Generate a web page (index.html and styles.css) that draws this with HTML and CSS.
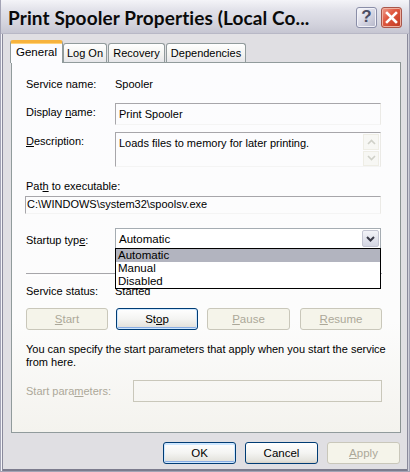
FILE: index.html
```html
<!DOCTYPE html>
<html>
<head>
<meta charset="utf-8">
<link rel="stylesheet" href="styles.css">
</head>
<body>
<div class="window">
  <div class="titlebar">
    <span class="title">Print Spooler Properties (Local Co...</span>
    <div class="tb-buttons">
      <div class="tb-btn help">?</div>
      <div class="tb-btn close">
        <svg width="13" height="13" viewBox="0 0 13 13"><path d="M2 2 L11 11 M11 2 L2 11" stroke="#fff" stroke-width="2.6" stroke-linecap="square"/></svg>
      </div>
    </div>
  </div>
  <div class="client">
    <div class="tabs">
      <div class="tab active">General</div>
      <div class="tab">Log On</div>
      <div class="tab">Recovery</div>
      <div class="tab">Dependencies</div>
    </div>
    <div class="panel">
      <div class="row r-name">
        <span class="label">Service name:</span>
        <span class="value">Spooler</span>
      </div>
      <div class="row r-display">
        <span class="label">Display <u>n</u>ame:</span>
        <div class="box display">Print Spooler</div>
      </div>
      <div class="row r-desc">
        <span class="label"><u>D</u>escription:</span>
        <div class="box desc">
          <span class="desc-text">Loads files to memory for later printing.</span>
          <div class="vscroll">
            <div class="sarrow"><svg width="9" height="6" viewBox="0 0 9 6"><path d="M1 5 L4.5 1.5 L8 5" fill="none" stroke="#cfd0c8" stroke-width="1.6"/></svg></div>
            <div class="sarrow"><svg width="9" height="6" viewBox="0 0 9 6"><path d="M1 1 L4.5 4.5 L8 1" fill="none" stroke="#cfd0c8" stroke-width="1.6"/></svg></div>
          </div>
        </div>
      </div>
      <div class="path-label">Pat<u>h</u> to executable:</div>
      <div class="box path">C:\WINDOWS\system32\spoolsv.exe</div>
      <div class="row r-startup">
        <span class="label">Startup typ<u>e</u>:</span>
        <div class="combo">
          <span class="combo-text">Automatic</span>
          <div class="combo-btn"><svg width="9" height="6" viewBox="0 0 9 6"><path d="M1 1 L4.5 4.5 L8 1" fill="none" stroke="#3a3a48" stroke-width="2"/></svg></div>
          <div class="dropdown">
            <div class="opt sel">Automatic</div>
            <div class="opt">Manual</div>
            <div class="opt">Disabled</div>
          </div>
        </div>
      </div>
      <div class="sep"></div>
      <div class="row r-status">
        <span class="label">Service status:</span>
        <span class="value">Started</span>
      </div>
      <div class="svc-buttons">
        <div class="btn disabled"><u>S</u>tart</div>
        <div class="btn focus">St<u>o</u>p</div>
        <div class="btn disabled"><u>P</u>ause</div>
        <div class="btn disabled"><u>R</u>esume</div>
      </div>
      <p class="info">You can specify the start parameters that apply when you start the service from here.</p>
      <div class="row r-params">
        <span class="label gray">Start para<u>m</u>eters:</span>
        <div class="box params"></div>
      </div>
    </div>
    <div class="footer">
      <div class="btn fbtn focus">OK</div>
      <div class="btn fbtn focus2">Cancel</div>
      <div class="btn fbtn disabled"><u>A</u>pply</div>
    </div>
  </div>
</div>
</body>
</html>
```

FILE: styles.css
```css
html, body {
  margin: 0;
  padding: 0;
  background: #e0dfe3;
}
body {
  width: 410px;
  height: 472px;
  overflow: hidden;
  font-family: "Liberation Sans", Arial, sans-serif;
  font-size: 11px;
  color: #000;
}
u { text-decoration: underline; text-underline-offset: 1px; }

.window {
  box-sizing: border-box;
  width: 410px;
  height: 472px;
  background: #e0dfe3;
  border: 1px solid #a3a3b5;
  border-top: none;
  box-shadow: inset 1px 0 0 #f4f4f8, inset -1px 0 0 #d0d0da, inset 2px 0 0 #8a8a9c, inset -2px 0 0 #8a8a9c, inset 0 -2px 0 #7c7c8e;
  display: flex;
  flex-direction: column;
}

.titlebar {
  height: 33px;
  flex: none;
  display: flex;
  align-items: center;
  justify-content: space-between;
  padding: 0 7px 0 7px;
  background: linear-gradient(#f4f4f8 0%, #e2e2ea 30%, #d4d4de 70%, #c6c6d2 100%);
  border-bottom: 1px solid #b8b8c6;
}
.title {
  font-family: "Lato", "Liberation Sans", sans-serif;
  font-weight: 700;
  font-size: 19px;
  letter-spacing: 0.1px;
  color: #0a0a0a;
  padding-top: 1px;
}
.tb-buttons {
  display: flex;
  gap: 4px;
  padding-top: 1px;
}
.tb-btn {
  width: 21px;
  height: 21px;
  box-sizing: border-box;
  border-radius: 3px;
  display: flex;
  align-items: center;
  justify-content: center;
}
.help {
  border: 1px solid #8a8ea8;
  background: linear-gradient(135deg, #fbfbfd 0%, #dcdce8 45%, #b4b6c8 100%);
  box-shadow: inset 0 0 0 1px #f2f2f8;
  font-family: "Liberation Sans", Arial, sans-serif;
  font-weight: 700;
  font-size: 17px;
  color: #4a4c62;
}
.close {
  border: 1px solid #a8564a;
  background: linear-gradient(135deg, #f0a090 0%, #e05a42 40%, #c0361e 100%);
  box-shadow: inset 0 0 0 1px #f0b0a0;
}

.client {
  flex: 1;
  display: flex;
  flex-direction: column;
  padding: 6px 10px 0 9px;
}

.tabs {
  display: flex;
  align-items: flex-end;
  height: 22px;
  position: relative;
  z-index: 2;
}
.tab {
  box-sizing: border-box;
  height: 19px;
  margin-right: 1px;
  border: 1px solid #919b9c;
  border-bottom: none;
  border-radius: 3px 3px 0 0;
  background: linear-gradient(#ffffff, #f3f3f0 60%, #e6e6ea);
  line-height: 18px;
  font-size: 11px;
  text-align: center;
}
.tab:nth-child(2) { width: 44px; }
.tab:nth-child(3) { width: 57px; }
.tab:nth-child(4) { width: 80px; }
.tab.active {
  height: 23px;
  width: 53px;
  margin-right: 0;
  margin-bottom: -1px;
  background: #fcfcfe;
  border-top: 3px solid #f7b33d;
  border-left: 1px solid #919b9c;
  border-right: 1px solid #919b9c;
  box-shadow: inset 0 1px 0 #ffd27a;
  line-height: 19px;
  font-size: 11.5px;
}

.panel {
  box-sizing: border-box;
  width: 390px;
  height: 371px;
  margin-left: 1px;
  border: 1px solid #919b9c;
  border-right-color: #8a9292;
  background: linear-gradient(#fcfcfe 0%, #fcfcfc 70%, #f4f3ee 100%);
  padding: 0 18px 0 14px;
  display: flex;
  flex-direction: column;
  position: relative;
}

.row {
  display: flex;
  align-items: flex-start;
}
.label {
  width: 89px;
  flex: none;
  line-height: 16px;
}
.label.gray { color: #aca899; }
.value { line-height: 16px; }

.r-name { margin-top: 13px; height: 16px; }

.box {
  box-sizing: border-box;
  border-top: 1px solid #a7a6aa;
  border-left: 1px solid #a7a6aa;
  border-right: 1px solid #ebeae6;
  border-bottom: 1px solid #f4f4f4;
  line-height: 16px;
  padding: 1px 3px;
}
.r-display { margin-top: 11px; }
.r-display .label { margin-top: 1px; }
.display { width: 266px; height: 22px; padding-top: 2px; }

.r-desc { margin-top: 7px; }
.r-desc .label { margin-top: 1px; }
.desc {
  width: 266px;
  height: 35px;
  display: flex;
  justify-content: space-between;
  padding: 2px 1px 0 3px;
}
.vscroll {
  display: flex;
  flex-direction: column;
  gap: 1px;
  margin-top: -1px;
}
.sarrow {
  width: 16px;
  height: 16px;
  box-sizing: border-box;
  border: 1px solid #eeede5;
  background: #f7f7f4;
  display: flex;
  align-items: center;
  justify-content: center;
}

.path-label {
  margin-top: 11px;
  line-height: 16px;
}
.path {
  margin-top: 2px;
  margin-left: -1px;
  width: 356px;
  height: 18px;
  line-height: 15px;
  padding: 0 3px 0 1px;
}

.r-startup { margin-top: 14px; }
.r-startup .label { margin-top: 4px; }
.combo {
  position: relative;
  box-sizing: border-box;
  width: 266px;
  height: 21px;
  border: 1px solid #a5acb2;
  background: #fff;
  display: flex;
  align-items: center;
  justify-content: space-between;
  padding: 0 1px 0 3px;
}
.combo-text { line-height: 16px; font-size: 11.5px; }
.combo-btn {
  width: 17px;
  height: 17px;
  box-sizing: border-box;
  border: 1px solid #c4c5d2;
  border-radius: 2px;
  background: linear-gradient(#f3f3f8, #d4d6e2);
  display: flex;
  align-items: center;
  justify-content: center;
}
.dropdown {
  position: absolute;
  left: -1px;
  top: 19px;
  width: 266px;
  box-sizing: border-box;
  border: 1px solid #000;
  background: #fff;
  z-index: 5;
}
.opt {
  height: 13px;
  line-height: 13px;
  padding-left: 2px;
  font-size: 11.5px;
}
.opt.sel { background: #b2b4bf; }

.sep {
  margin-top: 24px;
  height: 1px;
  border-top: 1px solid #a7a6aa;
  border-bottom: 1px solid #fff;
  width: 356px;
}
.r-status { margin-top: 7px; }

.svc-buttons {
  display: flex;
  margin-top: 9px;
}
.btn {
  box-sizing: border-box;
  height: 22px;
  border: 1px solid #003c74;
  border-radius: 3px;
  background: linear-gradient(#ffffff 0%, #f4f4f2 50%, #e3e2dc 90%, #d6d0c5 100%);
  display: flex;
  align-items: center;
  justify-content: center;
  font-size: 11.5px;
}
.btn.disabled {
  border-color: #c9c7ba;
  background: #f5f4ea;
  color: #aca899;
}
.svc-buttons .btn { width: 82px; }
.svc-buttons .btn:nth-child(2) { margin-left: 8px; box-shadow: inset 0 0 0 1px #cee7ff, inset 0 -2px 0 #89ade4; }
.svc-buttons .btn:nth-child(3) { margin-left: 9px; width: 83px; }
.svc-buttons .btn:nth-child(4) { margin-left: 10px; }

.info {
  margin: 13px 0 0 0;
  line-height: 13px;
  width: 360px;
}

.r-params { margin-top: 11px; }
.r-params .label { margin-top: 3px; width: 107px; }
.params {
  width: 249px;
  height: 22px;
  border: 1px solid #c9c7ba;
  background: transparent;
}

.footer {
  display: flex;
  justify-content: flex-end;
  gap: 9px;
  margin-top: 9px;
  width: 390px;
}
.fbtn { width: 73px; height: 22px; }
.fbtn.focus { box-shadow: inset 0 0 0 1px #cee7ff, inset 0 -2px 0 #89ade4, inset 0 2px 0 #cee7ff; }
```
